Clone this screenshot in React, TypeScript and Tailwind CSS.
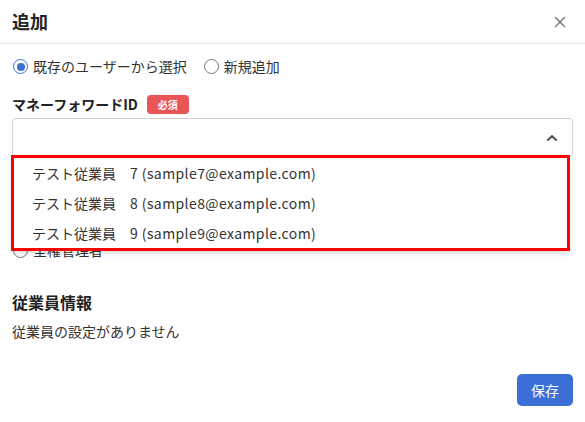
import { X, ChevronUp } from "lucide-react";

const font = { fontFamily: '"Noto Sans CJK JP", "Noto Sans", sans-serif' };

const options = [
  { name: "テスト従業員　7", email: "sample7@example.com" },
  { name: "テスト従業員　8", email: "sample8@example.com" },
  { name: "テスト従業員　9", email: "sample9@example.com" },
];

function Radio({ checked, label }: { checked?: boolean; label: string }) {
  return (
    <label className="flex items-center gap-[5px]">
      <span
        className={`ml-[1px] flex h-[15px] w-[15px] items-center justify-center rounded-full border-[1.5px] ${
          checked ? "border-[#3b6fd6]" : "border-[#777]"
        }`}
      >
        {checked && <span className="h-[8px] w-[8px] rounded-full bg-[#3b6fd6]" />}
      </span>
      <span className="text-[14px] text-[#333]">{label}</span>
    </label>
  );
}

export default function App() {
  return (
    <div className="h-[422px] w-[585px] bg-white text-[#333]" style={font}>
      {/* Header */}
      <div className="flex h-[44px] items-center justify-between border-b border-[#e6e6e6] pl-[12px] pr-[16px]">
        <h1 className="text-[18px] font-bold text-[#222]">追加</h1>
        <X size={18} strokeWidth={2} className="text-[#777]" />
      </div>

      {/* Body */}
      <div className="px-[12px] pt-[12px]">
        <div className="flex items-center gap-[16px]">
          <Radio checked label="既存のユーザーから選択" />
          <Radio label="新規追加" />
        </div>

        <div className="mt-[17px] flex items-center gap-[9px]">
          <span className="text-[14px] font-bold text-[#222]">マネーフォワードID</span>
          <span className="rounded-[4px] bg-[#e85555] px-[11px] py-[2px] text-[10px] font-bold text-white">
            必須
          </span>
        </div>

        <div className="relative mt-[3px]">
          <div className="flex h-[39px] items-center justify-end rounded-[4px] border border-[#cfcfcf] pr-[12px]">
            <ChevronUp size={16} strokeWidth={3} className="text-[#555]" />
          </div>

          {/* Dropdown */}
          <div className="absolute left-[-1px] top-[37px] z-10 w-[559px] border-[3px] border-[#ff0000] bg-white shadow-md">
            {options.map((o) => (
              <div key={o.email} className="flex h-[30px] items-center pl-[18px] text-[14px] text-[#333]">
                {o.name} <span className="ml-[4px] tracking-[0.4px]">({o.email})</span>
              </div>
            ))}
          </div>
        </div>

        <div className="mt-[83px]">
          <Radio label="全権管理者" />
        </div>

        <h2 className="mt-[29px] text-[16px] font-bold text-[#222]">従業員情報</h2>
        <p className="mt-[7px] text-[14px] text-[#333]">従業員の設定がありません</p>

        <div className="mt-[32px] flex justify-end">
          <button className="h-[32px] w-[56px] rounded-[5px] bg-[#3b6fd6] text-[14px] text-white">保存</button>
        </div>
      </div>
    </div>
  );
}
